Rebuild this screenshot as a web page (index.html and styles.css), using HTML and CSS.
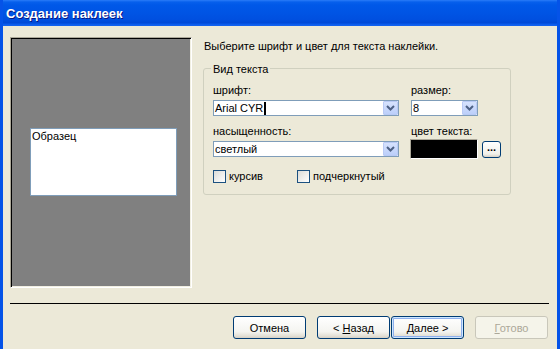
FILE: index.html
```html
<!DOCTYPE html>
<html lang="ru">
<head>
    <meta charset="UTF-8">
    <title>Создание наклеек</title>
    <link rel="stylesheet" href="styles.css">
</head>
<body>
    <div class="window">
        <div class="titlebar">
            <span class="title">Создание наклеек</span>
        </div>

        <div class="client">
            <div class="main">
                <!-- Образец наклейки -->
                <div class="preview">
                    <div class="sample">Образец</div>
                </div>

                <div class="settings">
                    <p class="intro">Выберите шрифт и цвет для текста наклейки.</p>

                    <div class="group">
                        <span class="group-title">Вид текста</span>
                        <div class="fields">
                            <label class="field-label label-top">шрифт:</label>
                            <label class="field-label label-top">размер:</label>

                            <div class="combo combo-top">
                                <span class="combo-text">Arial CYR<span class="caret"></span></span>
                                <span class="combo-btn"><svg width="9" height="6" viewBox="0 0 9 6"><path d="M1 1 L4.5 4.5 L8 1" fill="none" stroke="#4d6185" stroke-width="2"/></svg></span>
                            </div>
                            <div class="combo combo-top combo-small">
                                <span class="combo-text">8</span>
                                <span class="combo-btn"><svg width="9" height="6" viewBox="0 0 9 6"><path d="M1 1 L4.5 4.5 L8 1" fill="none" stroke="#4d6185" stroke-width="2"/></svg></span>
                            </div>

                            <label class="field-label label-mid">насыщенность:</label>
                            <label class="field-label label-mid">цвет текста:</label>

                            <div class="row-mid">
                                <div class="combo">
                                    <span class="combo-text">светлый</span>
                                    <span class="combo-btn"><svg width="9" height="6" viewBox="0 0 9 6"><path d="M1 1 L4.5 4.5 L8 1" fill="none" stroke="#4d6185" stroke-width="2"/></svg></span>
                                </div>
                            </div>
                            <div class="row-mid color-row">
                                <span class="color-box"></span>
                                <button class="dots-btn">...</button>
                            </div>

                            <div class="checks">
                                <label class="check check-first"><span class="box"></span>курсив</label>
                                <label class="check"><span class="box"></span>подчеркнутый</label>
                            </div>
                        </div>
                    </div>
                </div>
            </div>

            <div class="separator"></div>

            <div class="buttons">
                <button class="btn">Отмена</button>
                <button class="btn btn-back">&lt; <u>Н</u>азад</button>
                <button class="btn btn-default"><u>Д</u>алее &gt;</button>
                <button class="btn btn-disabled" disabled><u>Г</u>отово</button>
            </div>
        </div>
    </div>
</body>
</html>
```

FILE: styles.css
```css
/* Окно мастера в стиле Windows XP */
body {
    margin: 0;
    font-family: 'Liberation Sans', Arial, sans-serif;
    font-size: 11px;
    line-height: 13px;
    color: #000;
    background-color: #ece9d8;
}

.window {
    width: 560px;
    height: 349px;
    box-sizing: border-box;
    border-left: 3px solid #0553e8;
    border-right: 3px solid #0553e8;
    background-color: #ece9d8;
    overflow: hidden;
}

.titlebar {
    height: 26px;
    margin: 0 -3px;
    padding-left: 6px;
    display: flex;
    align-items: center;
    background: linear-gradient(#2a7cf8 0, #0760ec 2px, #0058e8 5px, #0055e5 12px, #004fdf 20px, #0049d6 23px, #0a5aea 24px, #1564f0 26px);
}

.title {
    color: #fff;
    font-weight: bold;
    font-size: 13px;
    text-shadow: 1px 1px #0a1883;
    padding-top: 1px;
}

.client {
    padding: 11px 9px 0 7px;
}

.main {
    display: flex;
    gap: 11px;
}

/* Серая панель с образцом */
.preview {
    width: 182px;
    height: 251px;
    box-sizing: border-box;
    background-color: #808080;
    border: 1px solid;
    border-color: #aca899 #fff #fff #aca899;
    box-shadow: inset 1px 1px 0 #000, inset -1px -1px 0 #f1efe2;
    padding: 90px 0 0 19px;
}

.sample {
    width: 147px;
    height: 68px;
    box-sizing: border-box;
    background-color: #fff;
    border: 1px solid #7f9db9;
    padding: 1px 0 0 1px;
}

.settings {
    width: 308px;
}

.intro {
    margin: 3px 0 0 1px;
}

/* Рамка группы "Вид текста" */
.group {
    position: relative;
    margin-top: 15px;
    border: 1px solid #d0d0bf;
    border-radius: 3px;
    padding: 15px 0 11px 9px;
}

.group-title {
    position: absolute;
    top: -6px;
    left: 7px;
    padding: 0 2px;
    background-color: #ece9d8;
}

.fields {
    display: grid;
    grid-template-columns: 186px auto;
    column-gap: 12px;
}

.field-label {
    display: block;
    height: 13px;
}

.label-top {
    margin-bottom: 3px;
}

.label-mid {
    margin-top: 9px;
    margin-bottom: 1px;
}

.combo {
    height: 16px;
    box-sizing: border-box;
    border: 1px solid #7f9db9;
    background-color: #fff;
    display: flex;
    align-items: center;
}

.combo-small {
    width: 67px;
}

.combo-text {
    flex: 1;
    padding-left: 1px;
    white-space: nowrap;
    display: flex;
    align-items: center;
}

.caret {
    display: inline-block;
    width: 2px;
    height: 13px;
    margin-left: 1px;
    background-color: #000;
}

.combo-btn {
    width: 15px;
    height: 14px;
    box-sizing: border-box;
    border: 1px solid #b9caf5;
    border-radius: 1px;
    background: linear-gradient(#d6e2fd, #bccffa);
    display: flex;
    align-items: center;
    justify-content: center;
}

.row-mid {
    height: 20px;
    display: flex;
    align-items: center;
}

.row-mid .combo {
    width: 186px;
}

.color-row {
    margin-left: -1px;
    gap: 4px;
}

.color-box {
    width: 68px;
    height: 20px;
    box-sizing: border-box;
    background-color: #000;
    border: 1px solid;
    border-color: #aca899 #fff #fff #aca899;
}

.dots-btn {
    width: 19px;
    height: 17px;
    padding: 0 0 4px;
    border: 1px solid #003c74;
    border-radius: 3px;
    background: linear-gradient(#fff, #f0f0ea 80%, #d6d0c5);
    font-family: 'Liberation Sans', Arial, sans-serif;
    font-size: 11px;
    font-weight: bold;
    line-height: 8px;
}

/* Флажки */
.checks {
    grid-column: 1 / 3;
    margin-top: 11px;
    display: flex;
    height: 13px;
}

.check {
    display: flex;
    align-items: center;
    gap: 3px;
}

.check-first {
    width: 84px;
}

.box {
    width: 13px;
    height: 13px;
    box-sizing: border-box;
    border: 1px solid #1c5180;
    background: linear-gradient(135deg, #dcdcd7, #fff);
}

.separator {
    margin-top: 15px;
    height: 1px;
    background-color: #000;
    margin-right: -1px;
}

/* Кнопки мастера */
.buttons {
    display: flex;
    justify-content: flex-end;
    margin-top: 12px;
    padding-right: 0;
}

.btn {
    width: 73px;
    height: 23px;
    margin-left: 11px;
    padding: 0;
    border: 1px solid #003c74;
    border-radius: 3px;
    background: linear-gradient(#fff, #f4f4f0 70%, #e3e0d6 90%, #d6d0c5);
    font-family: 'Liberation Sans', Arial, sans-serif;
    font-size: 11px;
    color: #000;
}

.btn u {
    text-underline-offset: 1px;
}

.btn-default {
    margin-left: 1px;
    box-shadow: inset 0 0 0 1px #cee7ff, inset 0 0 0 2px #8fb0ec;
}

.btn-disabled {
    border-color: #c9c7ba;
    background: #f5f4ea;
    color: #aca899;
}
```
